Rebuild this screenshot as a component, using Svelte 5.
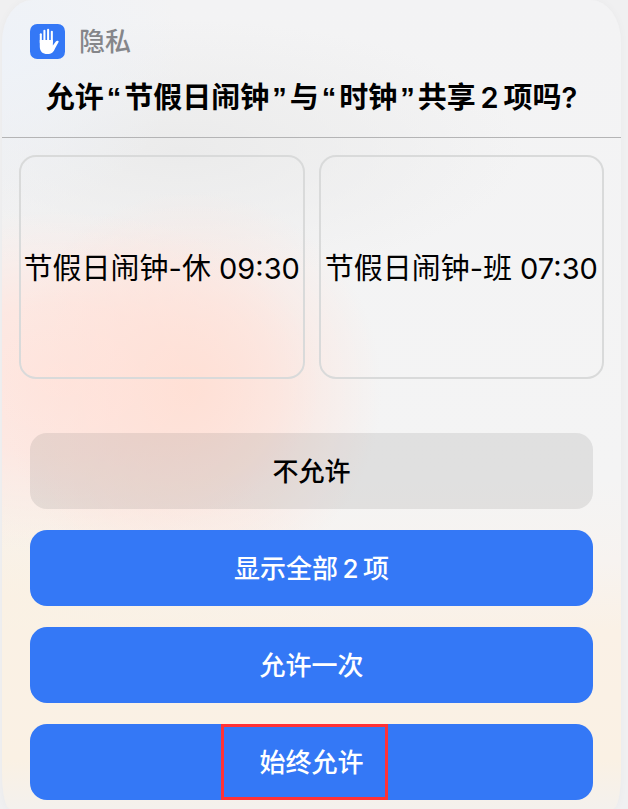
<script>
    let choice = '';

    const items = ['节假日闹钟-休 09:30', '节假日闹钟-班 07:30'];

    const actions = [
        { id: 'deny', label: '不允许' },
        { id: 'show', label: '显示全部\u20092\u2009项' },
        { id: 'once', label: '允许一次' },
        { id: 'always', label: '始终允许', marked: true }
    ];

    function choose(id) {
        choice = id;
    }
</script>

<main>
    <section class="sheet" role="dialog" aria-labelledby="question" data-choice={choice}>
        <header>
            <div class="source">
                <svg class="badge" viewBox="0 0 34 34" aria-hidden="true">
                    <rect width="34" height="34" rx="7" fill="#3478f6" />
                    <g fill="none" stroke="#fff" stroke-width="2" stroke-linecap="round">
                        <path d="M10.5 18V10" />
                        <path d="M14 17V6.6" />
                        <path d="M17.6 17V5.6" />
                        <path d="M21.2 18V7.6" />
                    </g>
                    <path
                        d="M9.5 15.5h12.7v5.4l2.9-3.9c.9-1.1 2.6-.8 2.8.2l-3.6 6.6c-1.4 3.5-3.3 5.4-7.4 5.4-4.6 0-7.4-2.7-7.4-7.4z"
                        fill="#fff"
                    />
                </svg>
                <span>隐私</span>
            </div>
            <h1 id="question">允许<q>节假日闹钟</q>与<q>时钟</q>共享{'\u2009'}2{'\u2009'}项吗?</h1>
        </header>

        <div class="items">
            {#each items as item}
                <div class="item">{item}</div>
            {/each}
        </div>

        <div class="actions">
            {#each actions as action}
                <button type="button" class:deny={action.id === 'deny'} on:click={() => choose(action.id)}>
                    {action.label}
                    {#if action.marked}
                        <i class="marker"></i>
                    {/if}
                </button>
            {/each}
        </div>
    </section>
</main>

<style>
    :global(body) {
        margin: 0;
        background: #f0f0f1;
    }
    main {
        box-sizing: border-box;
        min-height: 100vh;
        padding: 0 7px 0 2px;
        display: flex;
        font-family: Inter, "Noto Sans CJK SC", sans-serif;
        color: #000;
    }
    .sheet {
        flex: 1;
        min-width: 0;
        border-radius: 30px 30px 8px 8px / 42px 42px 36px 36px;
        background:
            radial-gradient(ellipse 190px 200px at 190px 390px, rgba(255, 223, 212, 0.9) 0%, rgba(255, 225, 216, 0.65) 45%, rgba(255, 229, 222, 0) 100%),
            radial-gradient(ellipse 260px 170px at 60px 380px, #ffe5de 0%, rgba(255, 229, 222, 0.8) 45%, rgba(255, 229, 222, 0) 100%),
            radial-gradient(ellipse 180px 170px at 0 50px, #eef2f8 0%, rgba(238, 242, 248, 0) 100%),
            radial-gradient(ellipse 340px 130px at 180px 150px, #ebebeb 0%, rgba(235, 235, 235, 0) 100%),
            radial-gradient(ellipse 340px 170px at 0 600px, #faf1e4 0%, rgba(250, 241, 228, 0) 100%),
            linear-gradient(#f3f3f4 0, #f4f4f4 480px, #f7f3f0 560px, #faf1e6 630px, #faf1e4 760px, #f4f1ed 100%);
        box-shadow: 0 0 8px rgba(0, 0, 0, 0.03);
    }
    header {
        border-bottom: 1px solid #b4b4b5;
        padding: 24px 28px 20px;
    }
    .source {
        display: flex;
        align-items: center;
        gap: 14px;
        height: 35px;
        font-size: 26px;
        line-height: 35px;
        font-weight: 500;
        color: #85868a;
    }
    .badge {
        width: 35px;
        height: 35px;
    }
    h1 {
        margin: 19px 0 0;
        font-size: 29px;
        line-height: 39px;
        font-weight: 600;
        text-align: center;
        white-space: nowrap;
    }
    q {
        quotes: "“" "”";
    }
    q::before,
    q::after {
        font-family: "Liberation Sans", sans-serif;
        line-height: 1;
        padding: 0 3px;
    }
    .items {
        display: grid;
        grid-template-columns: 1fr 1fr;
        gap: 14px;
        padding: 17px 17px 54px;
    }
    .item {
        box-sizing: border-box;
        height: 224px;
        min-width: 0;
        display: flex;
        align-items: center;
        justify-content: center;
        padding-bottom: 2px;
        border: 2px solid #d9dada;
        border-radius: 17px;
        font-size: 29px;
        white-space: nowrap;
    }
    .actions {
        display: flex;
        flex-direction: column;
        gap: 21px;
        padding: 0 28px 9px;
    }
    button {
        position: relative;
        height: 76px;
        padding: 0 0 4px;
        border: 0;
        border-radius: 17px;
        background: #3478f6;
        color: #fff;
        font: inherit;
        font-size: 26px;
        font-weight: 500;
        cursor: pointer;
    }
    .deny {
        background: rgba(80, 80, 80, 0.12);
        color: #000;
    }
    /* frame over the recommended answer */
    .marker {
        position: absolute;
        top: 0;
        bottom: 0;
        left: 34%;
        width: 161px;
        border: 3px solid #ff3235;
    }
</style>
